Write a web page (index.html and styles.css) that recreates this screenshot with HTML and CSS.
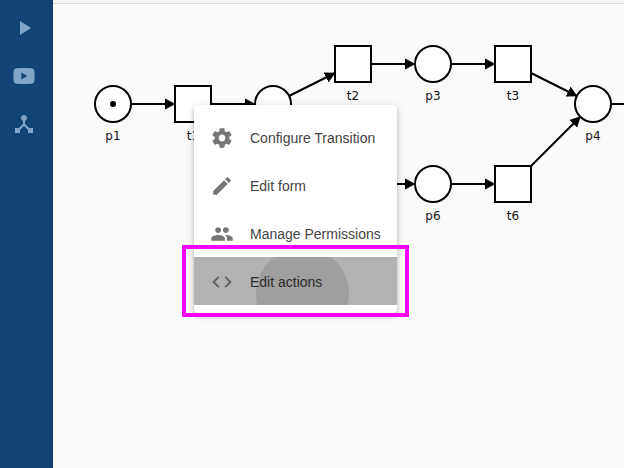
FILE: index.html
```
<!DOCTYPE html>
<html lang="en">
<head>
<meta charset="utf-8">
<title>Process editor</title>
<link rel="stylesheet" href="styles.css">
</head>
<body>
<div class="app">
  <nav class="sidebar">
    <svg class="nav-icon" viewBox="0 0 24 24"><path d="M8 5v14l11-7z"/></svg>
    <svg class="nav-icon" viewBox="0 0 24 24"><path fill-rule="evenodd" d="M5 4.2Q12 3.8 19 4.2Q22.4 4.4 22.5 8V16Q22.4 19.6 19 19.8Q12 20.2 5 19.8Q1.6 19.6 1.5 16V8Q1.6 4.4 5 4.2zM9.3 8.6v6.8l6-3.4z"/></svg>
    <svg class="nav-icon" viewBox="0 0 24 24"><path d="M17 16l-4-4V8.82C14.16 8.4 15 7.3 15 6c0-1.66-1.34-3-3-3S9 4.34 9 6c0 1.3.84 2.4 2 2.82V12l-4 4H3v5h5v-3.05l4-4.2 4 4.2V21h5v-5h-4z"/></svg>
  </nav>
  <main class="workspace">
    <div class="topbar"></div>
    <svg class="net" viewBox="53 4 571 464">
      <defs>
        <marker id="arrow" markerUnits="userSpaceOnUse" markerWidth="11" markerHeight="12" refX="10" refY="6" orient="auto"><path d="M0 .5L10.5 6L0 11.5z"/></marker>
      </defs>
      <g class="arcs">
        <path d="M131 104H175"/>
        <path d="M211 104H255"/>
        <path d="M289 96L335 73"/>
        <path d="M371 64H415"/>
        <path d="M451 64H495"/>
        <path d="M531 73L577 96"/>
        <path d="M371 184H415"/>
        <path d="M451 184H495"/>
        <path d="M531 166L580.3 116.7"/>
      </g>
      <path class="line" d="M611 104H624"/>
      <g class="nodes">
        <circle cx="113" cy="104" r="18"/>
        <circle cx="273" cy="104" r="18"/>
        <circle cx="433" cy="64" r="18"/>
        <circle cx="593" cy="104" r="18"/>
        <circle cx="433" cy="184" r="18"/>
        <rect x="175" y="86" width="36" height="36"/>
        <rect x="335" y="46" width="36" height="36"/>
        <rect x="495" y="46" width="36" height="36"/>
        <rect x="495" y="166" width="36" height="36"/>
      </g>
      <circle cx="113" cy="104" r="3"/>
      <g class="labels">
        <text x="113" y="140">p1</text>
        <text x="193" y="140">t1</text>
        <text x="353" y="100">t2</text>
        <text x="433" y="100">p3</text>
        <text x="513" y="100">t3</text>
        <text x="593" y="140">p4</text>
        <text x="433" y="220">p6</text>
        <text x="513" y="220">t6</text>
      </g>
    </svg>
  </main>
</div>
<div class="menu">
  <div class="item">
    <svg class="icon" viewBox="0 0 24 24"><path d="M19.43 12.98c.04-.32.07-.64.07-.98s-.03-.66-.07-.98l2.11-1.65c.19-.15.24-.42.12-.64l-2-3.46c-.12-.22-.39-.3-.61-.22l-2.49 1c-.52-.4-1.08-.73-1.69-.98l-.38-2.65C14.46 2.18 14.25 2 14 2h-4c-.25 0-.46.18-.49.42l-.38 2.65c-.61.25-1.17.59-1.69.98l-2.49-1c-.23-.09-.49 0-.61.22l-2 3.46c-.13.22-.07.49.12.64l2.11 1.65c-.04.32-.07.65-.07.98s.03.66.07.98l-2.11 1.65c-.19.15-.24.42-.12.64l2 3.46c.12.22.39.3.61.22l2.49-1c.52.4 1.08.73 1.69.98l.38 2.65c.03.24.24.42.49.42h4c.25 0 .46-.18.49-.42l.38-2.65c.61-.25 1.17-.59 1.69-.98l2.49 1c.23.09.49 0 .61-.22l2-3.46c.12-.22.07-.49-.12-.64l-2.11-1.65zM12 15.5c-1.93 0-3.5-1.57-3.5-3.5s1.57-3.5 3.5-3.5 3.5 1.57 3.5 3.5-1.57 3.5-3.5 3.5z"/></svg>
    <span>Configure Transition</span>
  </div>
  <div class="item">
    <svg class="icon" viewBox="0 0 24 24"><path d="M3 17.25V21h3.75L17.81 9.94l-3.75-3.75L3 17.25zM20.71 7.04c.39-.39.39-1.02 0-1.41l-2.34-2.34c-.39-.39-1.02-.39-1.41 0l-1.83 1.83 3.75 3.75 1.83-1.83z"/></svg>
    <span>Edit form</span>
  </div>
  <div class="item">
    <svg class="icon" viewBox="0 0 24 24"><path d="M16 11c1.66 0 2.99-1.34 2.99-3S17.66 5 16 5s-3 1.34-3 3 1.34 3 3 3zm-8 0c1.66 0 2.99-1.34 2.99-3S9.66 5 8 5 5 6.34 5 8s1.34 3 3 3zm0 2c-2.33 0-7 1.17-7 3.5V19h14v-2.5c0-2.33-4.67-3.5-7-3.5zm8 0c-.29 0-.62.02-.97.05 1.16.84 1.97 1.97 1.97 3.45V19h6v-2.5c0-2.33-4.67-3.5-7-3.5z"/></svg>
    <span>Manage Permissions</span>
  </div>
  <div class="item active">
    <svg class="icon" viewBox="0 0 24 24"><path d="M9.4 16.6L4.8 12l4.6-4.6L8 6l-6 6 6 6 1.4-1.4zm5.2 0l4.6-4.6-4.6-4.6L16 6l6 6-6 6-1.4-1.4z"/></svg>
    <span>Edit actions</span>
  </div>
</div>
<div class="highlight"></div>
</body>
</html>
```
FILE: styles.css
```
* { box-sizing: border-box; }
body {
  margin: 0;
  overflow: hidden;
  background: #fafafa;
  font-family: "Liberation Sans", Arial, sans-serif;
}
.app { display: flex; height: 468px; }
.sidebar {
  display: flex;
  flex-direction: column;
  align-items: center;
  gap: 24px;
  width: 53px;
  padding: 16px 4px 0 0;
  background: #104477;
  border-right: 1px solid #0b386b;
}
.nav-icon { width: 24px; height: 24px; fill: #80a7c9; }
.workspace { flex: 1; display: flex; flex-direction: column; }
.topbar { height: 4px; background: #f6f6f6; border-bottom: 1px solid #dadada; }
.net { display: block; width: 571px; height: 464px; }
.arcs path, .line { fill: none; stroke: #000; stroke-width: 2; }
.arcs path { marker-end: url(#arrow); }
.nodes { fill: #fff; stroke: #000; stroke-width: 2; }
.labels { font: 12px "DejaVu Sans", Verdana, sans-serif; text-anchor: middle; fill: #111; }
.menu {
  position: absolute;
  left: 194px;
  top: 105px;
  width: 203px;
  padding: 8px 0;
  border-radius: 4px;
  background: #fff;
  box-shadow: 0 2px 4px -1px rgba(0,0,0,.2), 0 4px 5px rgba(0,0,0,.1), 0 1px 10px rgba(0,0,0,.12);
}
.item {
  display: flex;
  align-items: center;
  gap: 16px;
  height: 48px;
  padding: 2px 16px 0;
  font-size: 14px;
  color: #444;
  white-space: nowrap;
}
.icon { flex: none; width: 24px; height: 24px; padding: 0.3px; fill: #757575; }
.active {
  color: #2c2c2c;
  background: radial-gradient(circle at 108.5px 37px, #9f9f9f 46px, #b2b2b2 47px);
}
.active .icon { fill: #606060; }
.highlight {
  position: absolute;
  left: 182px;
  top: 245px;
  width: 227px;
  height: 72px;
  border: 4px solid #ff00fa;
}
```
